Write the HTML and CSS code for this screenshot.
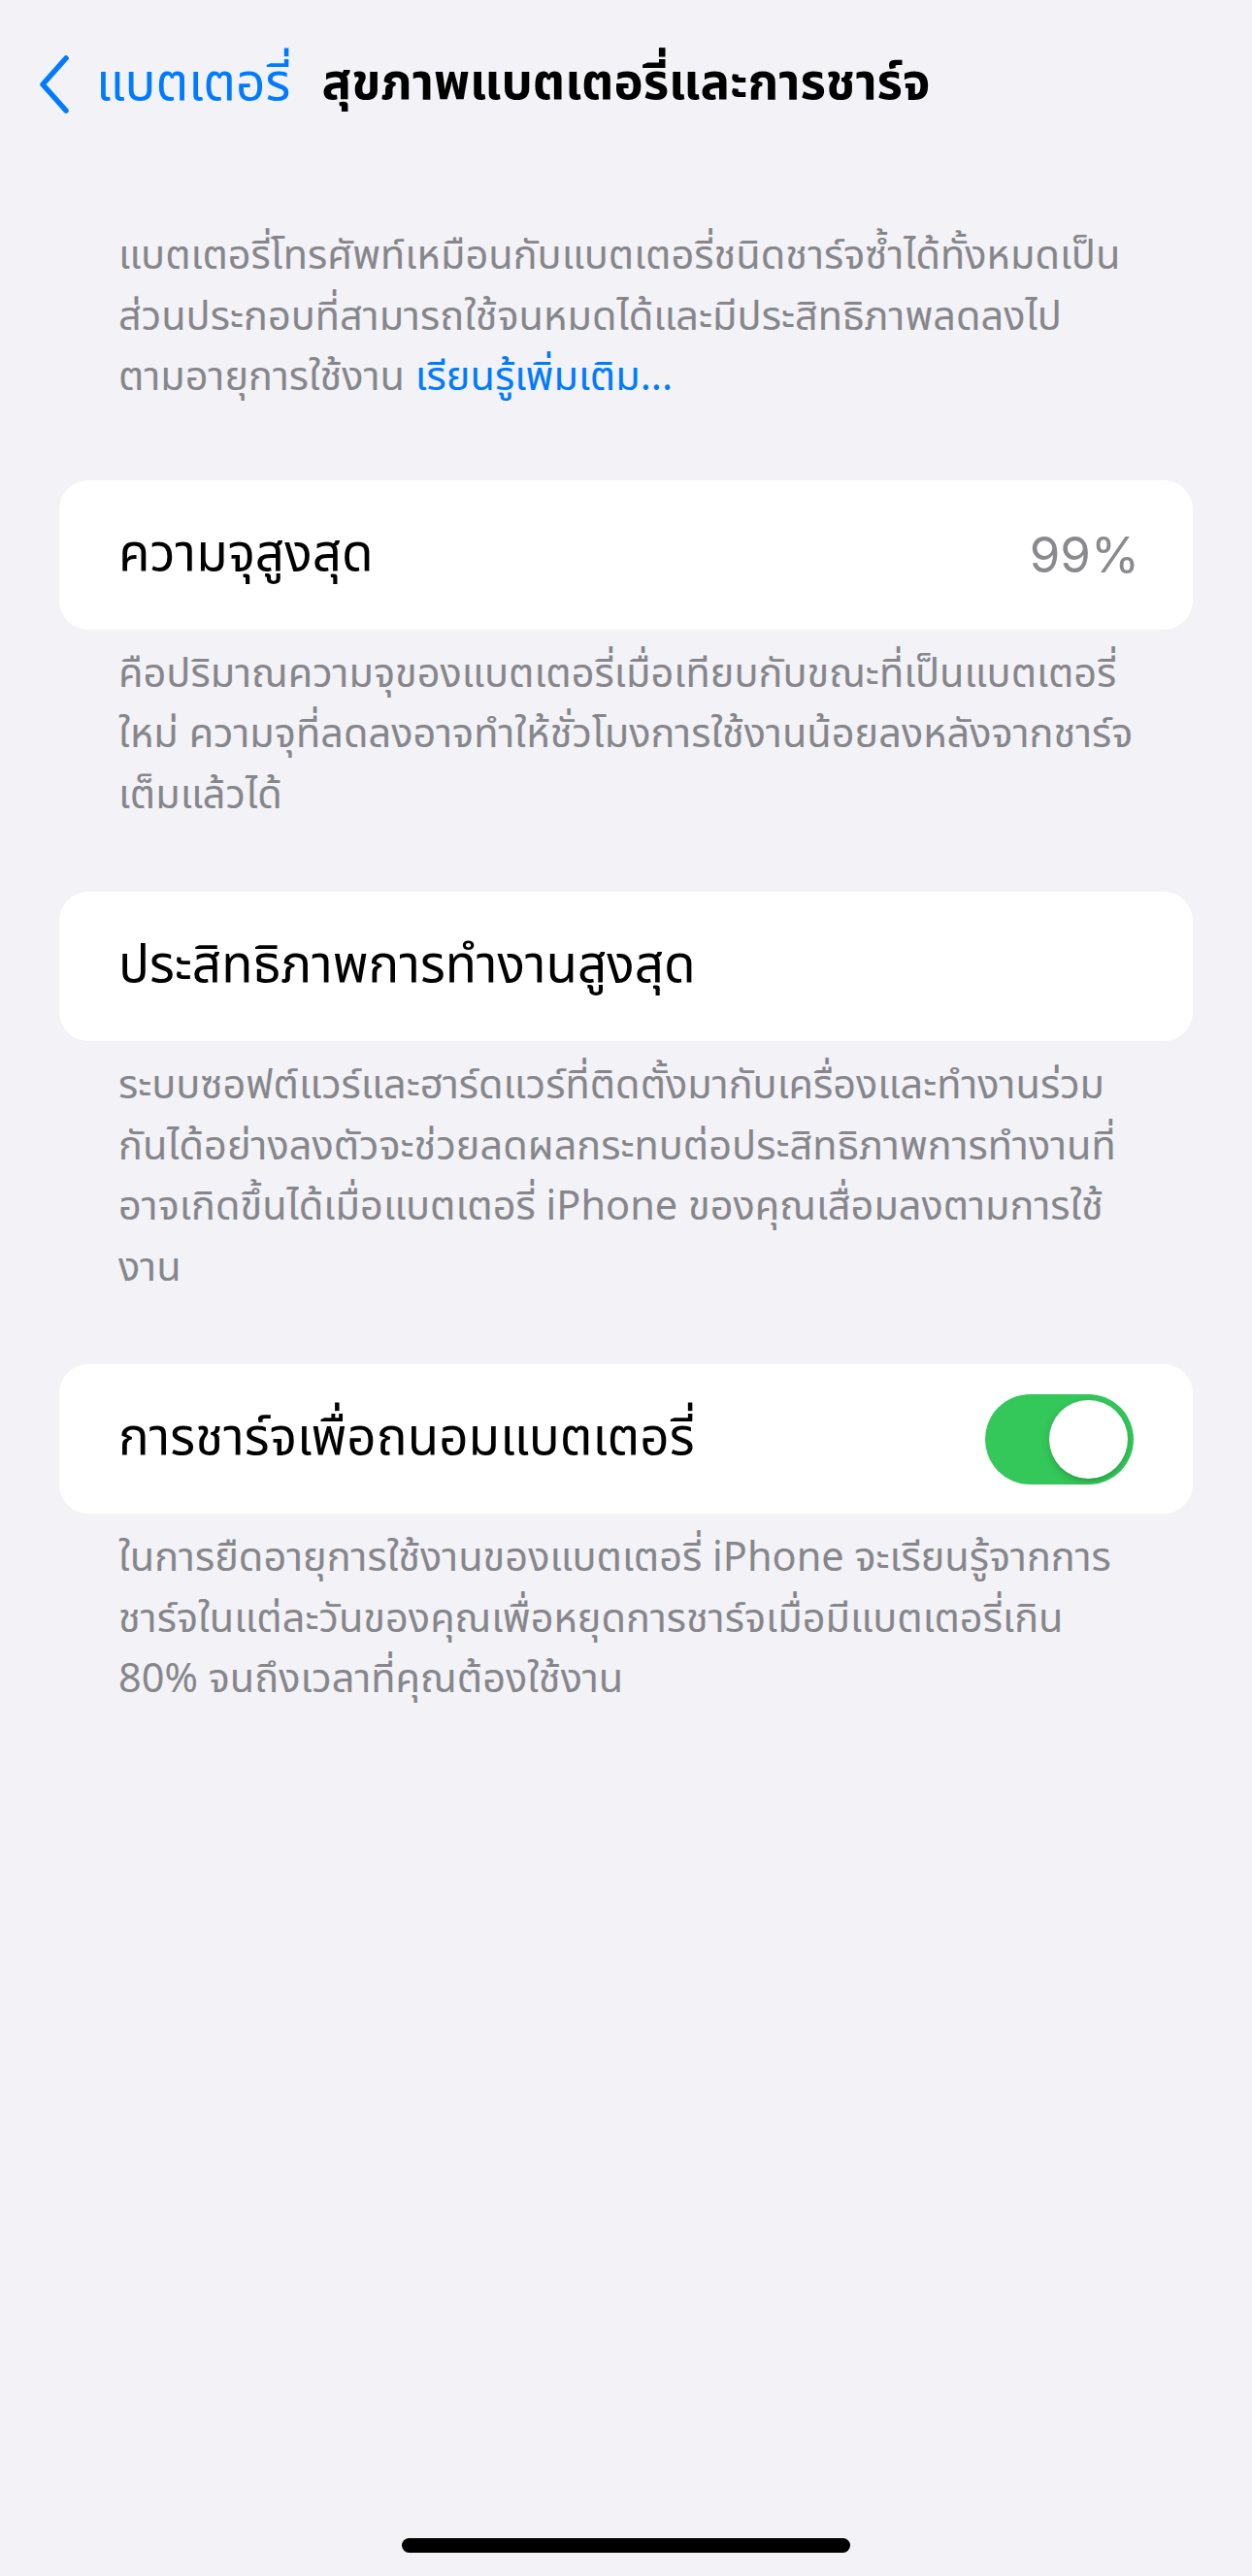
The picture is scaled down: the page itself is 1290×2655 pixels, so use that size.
FILE: index.html
```html
<!DOCTYPE html>
<html lang="th">
<head>
<meta charset="utf-8">
<title>สุขภาพแบตเตอรี่และการชาร์จ</title>
<link rel="stylesheet" href="styles.css">
</head>
<body>
<div class="screen">
  <header class="nav">
    <a class="back" href="#">
      <svg class="chevron" viewBox="0 0 36 60" width="36" height="60" aria-hidden="true">
        <path d="M30 3 L6 30 L30 57" fill="none" stroke="#007AFF" stroke-width="5.5" stroke-linecap="round" stroke-linejoin="round"/>
      </svg>
      <span class="back-label">แบตเตอรี่</span>
    </a>
    <h1 class="title">สุขภาพแบตเตอรี่และการชาร์จ</h1>
    <div class="nav-spacer"></div>
  </header>

  <main class="content">
    <p class="footnote intro">
      <span class="line">แบตเตอรี่โทรศัพท์เหมือนกับแบตเตอรี่ชนิดชาร์จซ้ำได้ทั้งหมดเป็น</span>
      <span class="line">ส่วนประกอบที่สามารถใช้จนหมดได้และมีประสิทธิภาพลดลงไป</span>
      <span class="line">ตามอายุการใช้งาน <a class="link" href="#">เรียนรู้เพิ่มเติม...</a></span>
    </p>

    <section class="group">
      <div class="cell">
        <span class="label">ความจุสูงสุด</span>
        <span class="value">99%</span>
      </div>
      <p class="footnote">
        <span class="line">คือปริมาณความจุของแบตเตอรี่เมื่อเทียบกับขณะที่เป็นแบตเตอรี่</span>
        <span class="line">ใหม่ ความจุที่ลดลงอาจทำให้ชั่วโมงการใช้งานน้อยลงหลังจากชาร์จ</span>
        <span class="line">เต็มแล้วได้</span>
      </p>
    </section>

    <section class="group">
      <div class="cell">
        <span class="label">ประสิทธิภาพการทำงานสูงสุด</span>
      </div>
      <p class="footnote">
        <span class="line">ระบบซอฟต์แวร์และฮาร์ดแวร์ที่ติดตั้งมากับเครื่องและทำงานร่วม</span>
        <span class="line">กันได้อย่างลงตัวจะช่วยลดผลกระทบต่อประสิทธิภาพการทำงานที่</span>
        <span class="line">อาจเกิดขึ้นได้เมื่อแบตเตอรี่ iPhone ของคุณเสื่อมลงตามการใช้</span>
        <span class="line">งาน</span>
      </p>
    </section>

    <section class="group">
      <div class="cell">
        <span class="label">การชาร์จเพื่อถนอมแบตเตอรี่</span>
        <span class="switch on" role="switch" aria-checked="true"><span class="knob"></span></span>
      </div>
      <p class="footnote">
        <span class="line">ในการยืดอายุการใช้งานของแบตเตอรี่ iPhone จะเรียนรู้จากการ</span>
        <span class="line">ชาร์จในแต่ละวันของคุณเพื่อหยุดการชาร์จเมื่อมีแบตเตอรี่เกิน</span>
        <span class="line">80% จนถึงเวลาที่คุณต้องใช้งาน</span>
      </p>
    </section>
  </main>

  <div class="home-indicator"></div>
</div>
</body>
</html>
```

FILE: styles.css
```css
* { box-sizing: border-box; }

html, body {
  margin: 0;
  padding: 0;
  background: #F2F2F7;
}

body {
  font-family: "Noto Sans Thai", "Noto Sans", "Liberation Sans", sans-serif;
  color: #000;
}

.screen {
  width: 1290px;
  height: 2655px;
  display: flex;
  flex-direction: column;
  overflow: hidden;
}

/* Navigation bar */
.nav {
  display: grid;
  grid-template-columns: 1fr auto 1fr;
  align-items: center;
  height: 127px;
  padding-top: 47px;
}

.back {
  display: flex;
  align-items: center;
  gap: 25px;
  padding-left: 38px;
  color: #007AFF;
  text-decoration: none;
}

.chevron {
  display: block;
  flex: none;
}

.back-label {
  font-size: 53px;
  line-height: 60px;
  font-weight: 400;
}

.title {
  margin: 0;
  font-size: 51px;
  line-height: 60px;
  font-weight: 700;
  text-align: center;
  white-space: nowrap;
}

/* Content */
.content {
  display: flex;
  flex-direction: column;
  padding: 0 61px;
}

.footnote {
  margin: 0;
  padding: 0 61px;
  font-size: 41.5px;
  line-height: 62.5px;
  color: #86868B;
}

.footnote .line {
  display: block;
  white-space: nowrap;
}

.intro {
  margin-top: 107px;
}

.link {
  color: #007AFF;
  text-decoration: none;
}

.group {
  margin-top: 73px;
}

.group + .group {
  margin-top: 67px;
}

.group .footnote {
  margin-top: 16px;
}

.cell {
  display: flex;
  align-items: center;
  justify-content: space-between;
  height: 154px;
  padding: 0 55px 0 61px;
  background: #fff;
  border-radius: 30px;
}

.label {
  font-size: 53px;
  font-weight: 400;
  white-space: nowrap;
}

.value {
  font-size: 51px;
  color: #8A8A8E;
  font-family: "Inter", "Liberation Sans", sans-serif;
}

/* Switch */
.switch {
  position: relative;
  display: block;
  width: 153px;
  height: 93px;
  border-radius: 47px;
  background: #E9E9EB;
  margin-right: 6px;
}

.switch.on {
  background: #34C759;
}

.knob {
  position: absolute;
  top: 6px;
  right: 6px;
  width: 81px;
  height: 81px;
  border-radius: 50%;
  background: #fff;
  box-shadow: 0 3px 8px rgba(0, 0, 0, 0.15), 0 3px 1px rgba(0, 0, 0, 0.06);
}

/* Home indicator */
.home-indicator {
  margin: auto auto 24px;
  width: 462px;
  height: 15px;
  border-radius: 8px;
  background: #000;
}
```
